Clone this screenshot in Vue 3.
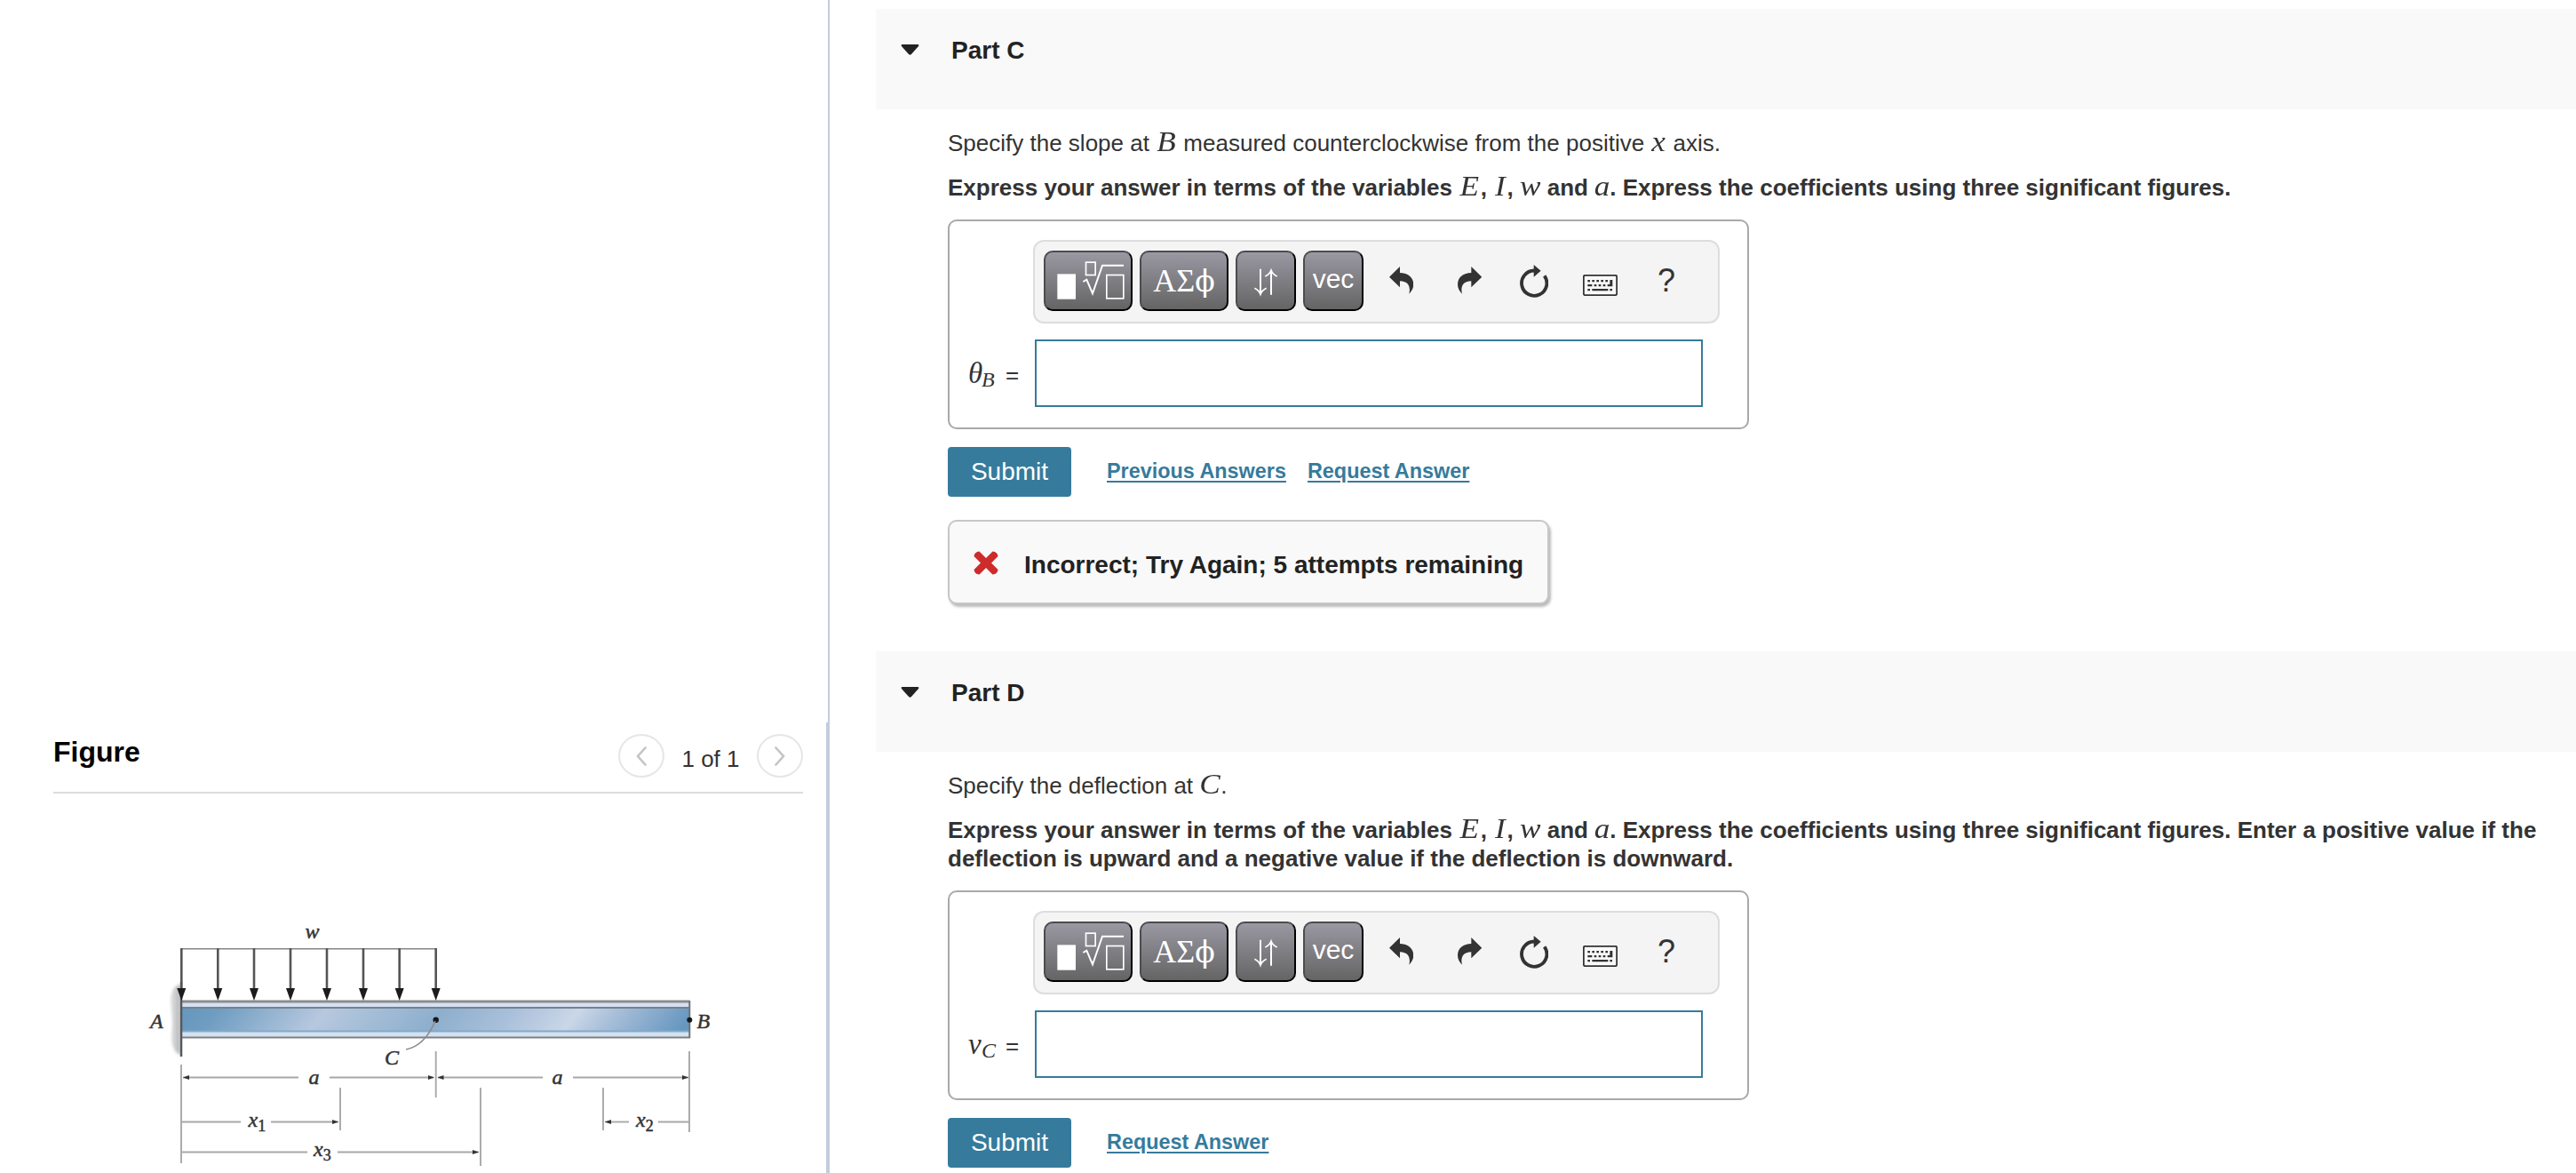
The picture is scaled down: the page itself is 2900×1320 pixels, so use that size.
<template>
  <div class="page">
    <!-- figure panel -->
    <aside class="left-pane">
      <div class="pane-blank"></div>
      <section class="figure-pane">
        <div class="figure-head">
          <h2>Figure</h2>
          <div class="pager">
            <button class="pager-btn">
              <svg width="12" height="22" viewBox="0 0 12 22"><path d="M10.5 1.5 2 11l8.500 9.500" /></svg>
            </button>
            <span class="pager-text">1 of 1</span>
            <button class="pager-btn">
              <svg width="12" height="22" viewBox="0 0 12 22"><path d="M1.500 1.500 10 11l-8.500 9.500" /></svg>
            </button>
          </div>
        </div>

        <svg class="beam" width="690" height="290" viewBox="140 1030 690 290">
          <defs>
            <linearGradient id="web" gradientUnits="userSpaceOnUse" x1="204" y1="1147" x2="776" y2="1147" gradientTransform="skewX(-38) translate(896 0)">
              <stop offset="0" stop-color="#6798bd" />
              <stop offset="0.06" stop-color="#6f9dc1" />
              <stop offset="0.27" stop-color="#b7c8df" />
              <stop offset="0.5" stop-color="#8dafcd" />
              <stop offset="0.64" stop-color="#a9bfda" />
              <stop offset="0.77" stop-color="#cad7e7" />
              <stop offset="0.84" stop-color="#abc0da" />
              <stop offset="1" stop-color="#6697bf" />
            </linearGradient>
            <linearGradient id="wall" x1="0" x2="1" y1="0" y2="0">
              <stop offset="0" stop-color="#e2e3e4" />
              <stop offset="1" stop-color="#b4b6b8" />
            </linearGradient>
            <filter id="soft" x="-50%" y="-20%" width="200%" height="140%"><feGaussianBlur stdDeviation="1.500" /></filter>
          </defs>

          <path d="M203 1108Q193 1109 192 1126L194 1150L193 1168Q194 1184 203 1187Z" fill="url(#wall)" filter="url(#soft)" />
          <rect x="204" y="1126" width="572" height="42" fill="#d5e1ef" />
          <rect x="204" y="1134" width="572" height="26" fill="url(#web)" />
          <path d="M204 1160.500H776" stroke="#82aacd" stroke-width="2" />
          <path d="M204 1134H776" stroke="#738191" stroke-width="2" />
          <path d="M204 1127H776" stroke="#8b8c90" stroke-width="3" />
          <path d="M204 1167.500H777" stroke="#7c7f83" stroke-width="2.200" />
          <path d="M776.300 1126V1168" stroke="#6f7479" stroke-width="2" />
          <path d="M204 1105V1189" stroke="#57585a" stroke-width="2.500" />

          <path d="M203 1067.700H492" stroke="#858585" stroke-width="1.600" />
          <g v-for="x in loadArrows" :key="x">
            <path :d="`M${x} 1067V1114`" stroke="#555" stroke-width="2.600" />
            <path :d="`M${x - 5} 1112H${x + 5}L${x} 1126Z`" fill="#1f1b1c" />
          </g>

          <circle cx="490.700" cy="1147.700" r="3.200" fill="#17181a" />
          <circle cx="776.300" cy="1147.700" r="3" fill="#17181a" />
          <path d="M490 1149Q478 1177 457 1181" fill="none" stroke="#8b8b8b" stroke-width="1.600" />

          <g stroke="#a8a8a8" stroke-width="1.900">
            <path v-for="d in dimLines" :key="d" :d="d" />
          </g>
          <path v-for="h in dimHeads" :key="h.join()" :d="`M${h[0]} ${h[1]}l${-7 * h[2]} -2.500v5z`" fill="#333" />

          <g class="beam-text">
            <text v-for="l in labels" :key="l.x" :x="l.x" :y="l.y">{{ l.t }}<tspan v-if="l.s" class="sub" dy="5">{{ l.s }}</tspan></text>
          </g>
        </svg>
      </section>
    </aside>

    <!-- question parts -->
    <main class="right-pane">
      <section v-for="part in parts" :key="part.name" class="part">
        <header class="part-head">
          <svg width="21" height="12" viewBox="0 0 21 12"><path d="M1.500 0H19.500Q21 .5 20 2L12 11Q10.500 12.500 9 11L1 2Q0 .5 1.500 0Z" fill="#222" /></svg>
          <h3>{{ part.name }}</h3>
        </header>
        <div class="part-body">
          <p>
            <span v-for="(t, i) in part.question" :key="i" :class="{ math: t.w }" :style="t.w && { width: t.w + 'px' }">{{ t.t }}</span>
          </p>
          <p class="hint">
            <span v-for="(t, i) in part.hint" :key="i" :class="{ math: t.w }" :style="t.w && { width: t.w + 'px' }">{{ t.t }}</span>
          </p>

          <div class="answer-box">
            <div class="toolbar">
              <button class="tool wide">
                <svg width="96" height="64" viewBox="6 6 288 192">
                  <rect x="46" y="79" width="62" height="85" fill="#fff" />
                  <g fill="none" stroke="#fff" stroke-width="5">
                    <rect x="142.500" y="39.500" width="32" height="43" />
                    <rect x="212.500" y="82.500" width="57" height="79" />
                    <path d="M133 105l12-7 20 47 33-95h72" stroke-width="6" />
                  </g>
                </svg>
              </button>
              <button class="tool wide greek">ΑΣ<span>ϕ</span></button>
              <button class="tool">
                <svg width="64" height="64" viewBox="6 6 192 192" fill="none" stroke="#fff" stroke-width="6">
                  <path d="M84 62v83M120 149V67" />
                  <path d="M64 127q15 7 20 21 5-14 20-21M100 87q15-7 20-21 5 14 20 21" stroke-width="5" />
                </svg>
              </button>
              <button class="tool vec">vec</button>
              <div class="icons">
                <svg class="undo" width="27.300" height="31" viewBox="0 0 82 93"><path :d="arrow" fill="#333" /></svg>
                <svg class="redo" width="27.300" height="31" viewBox="0 0 82 93"><path :d="arrow" transform="translate(82 0) scale(-1 1)" fill="#333" /></svg>
                <svg class="reset" width="32" height="37" viewBox="0 0 96 111">
                  <path d="M48 19.500A42.500 42.500 0 1 0 83 37" fill="none" stroke="#333" stroke-width="11.500" />
                  <path d="M47 0 71 20 47 41Z" fill="#333" />
                </svg>
                <svg class="keyboard" width="39" height="24" viewBox="0 0 117 72">
                  <rect x="2.500" y="2.500" width="112" height="67" rx="5" fill="#f9f9f9" stroke="#333" stroke-width="5.500" />
                  <path d="M16 18h8v7h-8zM31 18h8v7h-8zM46 18h8v7h-8zM61 18h8v7h-8zM76 18h8v7h-8zM91 18h9v22h-17v-7h8zM16 33h15v7h-15zM38 33h8v7h-8zM53 33h8v7h-8zM68 33h8v7h-8zM16 48h8v7h-8zM31 48h54v7h-54zM91 48h8v7h-8z" fill="#333" />
                </svg>
                <span class="help">?</span>
              </div>
            </div>
            <div class="answer-row">
              <label><i>{{ part.symbol }}</i><i class="idx">{{ part.index }}</i><span>=</span></label>
              <input type="text" />
            </div>
          </div>

          <div class="actions">
            <button class="submit">Submit</button>
            <a v-for="link in part.links" :key="link" href="#">{{ link }}</a>
          </div>

          <div v-if="part.feedback" class="feedback">
            <svg width="28" height="27" viewBox="0 0 28 27"><path d="M6.500 0.500 14 8 21.500 0.500Q27 1 27.500 6L20 13.500 27.500 21Q27 26 21.500 26.500L14 19 6.500 26.500Q1 26 .5 21L8 13.500 .5 6Q1 1 6.500 .5Z" fill="#cd2b2c" /></svg>
            <span>{{ part.feedback }}</span>
          </div>
        </div>
      </section>
    </main>
  </div>
</template>

<script setup>
const arrow = 'M0 35 36 0V21C62 21 82 36 82 60C82 74 75 84 67 92C72 72 68 50 36 49V70Z'

const variables = [
  { t: 'Express your answer in terms of the variables ' },
  { t: 'E', w: 24.5 },
  { t: ', ' },
  { t: 'I', w: 15.5 },
  { t: ', ' },
  { t: 'w', w: 23.5 },
  { t: ' and ' },
  { t: 'a', w: 17 }
]

const parts = [
  {
    name: 'Part C',
    question: [
      { t: 'Specify the slope at ' },
      { t: 'B', w: 24 },
      { t: ' measured counterclockwise from the positive ' },
      { t: 'x', w: 18 },
      { t: ' axis.' }
    ],
    hint: [...variables, { t: '. Express the coefficients using three significant figures.' }],
    symbol: 'θ',
    index: 'B',
    links: ['Previous Answers', 'Request Answer'],
    feedback: 'Incorrect; Try Again; 5 attempts remaining'
  },
  {
    name: 'Part D',
    question: [{ t: 'Specify the deflection at ' }, { t: 'C', w: 24 }, { t: '.' }],
    hint: [
      ...variables,
      { t: '. Express the coefficients using three significant figures. Enter a positive value if the deflection is upward and a negative value if the deflection is downward.' }
    ],
    symbol: 'v',
    index: 'C',
    links: ['Request Answer']
  }
]

// beam diagram
const loadArrows = [204.3, 245.3, 286, 327, 368, 409, 449.7, 490.7]

const dimLines = [
  'M204 1198V1309', 'M490.700 1183V1235', 'M776 1183V1274',
  'M383 1224V1272', 'M541 1224V1312', 'M679 1224V1272',
  'M206 1212.500H336', 'M371 1212.500H488', 'M493 1212.500H611', 'M645 1212.500H775',
  'M205 1262.500H271', 'M305 1262.500H381', 'M681 1262.500H708', 'M741 1262.500H776',
  'M205 1296.500H346', 'M380 1296.500H539'
]

// x, y, direction
const dimHeads = [
  [206, 1212.5, -1], [489, 1212.5, 1], [492.5, 1212.5, -1], [775, 1212.5, 1],
  [381, 1262.5, 1], [681, 1262.5, -1], [539, 1296.5, 1]
]

const labels = [
  { t: 'w', x: 343.5, y: 1056 },
  { t: 'A', x: 169, y: 1157 },
  { t: 'B', x: 784.5, y: 1157 },
  { t: 'C', x: 433, y: 1197.5 },
  { t: 'a', x: 347.5, y: 1219.5 },
  { t: 'a', x: 621.5, y: 1219.5 },
  { t: 'x', s: '1', x: 279.5, y: 1267.5 },
  { t: 'x', s: '2', x: 716, y: 1268 },
  { t: 'x', s: '3', x: 353, y: 1301 }
]
</script>

<style>
body { background: #fff; overflow: hidden; }
</style>

<style scoped>
.page { display: flex; width: 2900px; height: 1320px; overflow: hidden; color: #333; font-family: "Liberation Sans", Arial, sans-serif; font-size: 26px; }
h2, h3, p { margin: 0; }
button { padding: 0; font-family: inherit; cursor: pointer; }
svg { display: block; flex: none; }

.left-pane { width: 934px; flex: none; }
.pane-blank { height: 813px; border-right: 2px solid #c2cddd; }
.figure-pane { height: 507px; border-right: 4px solid #c2cddd; }
.figure-head { display: flex; justify-content: space-between; margin-left: 60px; width: 844px; height: 80px; box-sizing: border-box; padding-top: 13px; border-bottom: 2px solid #ddd; }
.figure-head h2 { color: #000; font-size: 32px; line-height: 40px; }
.pager { display: flex; height: 49px; }
.pager-btn { display: flex; align-items: center; justify-content: center; width: 52px; height: 49px; border: 2px solid #e6e6e6; border-radius: 50%; background: #fff; }
.pager-btn path { fill: none; stroke: #c4c4c4; stroke-width: 2.6; stroke-linecap: round; }
.pager-text { width: 104px; line-height: 56px; text-align: center; white-space: nowrap; }
.beam { margin: 137px 0 0 140px; }
.beam-text { font: italic 24px "Liberation Serif", serif; fill: #333; stroke: #333; stroke-width: .5; }
.beam-text .sub { font-style: normal; font-size: 18px; }

.right-pane { flex: 1; padding: 10px 0 0 52px; }
.part { margin-bottom: 53.500px; }
.part-head { display: flex; gap: 36px; height: 113px; padding-left: 28px; background: #f9f9f9; }
.part-head svg { margin-top: 40px; }
.part-head h3 { color: #222; font-size: 28px; line-height: 32px; margin-top: 31px; }
.part-body { padding: 22px 30px 0 81px; }
.part-body p { line-height: 32px; margin-bottom: 18px; }
.part-body .hint { font-weight: 700; margin-bottom: 20px; }
.math { display: inline-block; white-space: nowrap; text-align: center; font: italic 400 32px/0 "Liberation Serif", serif; transform: scaleX(1.1); }

.answer-box { width: 902px; height: 236px; box-sizing: border-box; border: 2px solid #a9a9a9; border-radius: 10px; padding: 21px 0 0 94px; }
.toolbar { display: flex; gap: 8px; width: 773px; height: 94px; box-sizing: border-box; padding: 10px 0 0 10px; border: 2px solid #ddd; border-radius: 12px; background: #f4f4f4; }
.tool { flex: none; width: 68px; height: 68px; border: 2px solid; border-color: #4c4c4c #000 #000 #4c4c4c; border-radius: 10px; background: linear-gradient(#9a98a2, #646464); color: #fff; }
.tool.wide { width: 100px; }
.greek { font-family: "Liberation Serif", serif; font-size: 36px; line-height: 60px; white-space: nowrap; }
.greek span { font-family: "DejaVu Serif", serif; font-size: 33px; line-height: 0; }
.vec { font-size: 30px; line-height: 57px; padding-bottom: 5px; }
.icons { display: flex; align-items: flex-start; margin-left: 20.500px; color: #333; }
.undo { margin-top: 18px; }
.redo { margin: 18px 0 0 50px; }
.reset { margin: 16px 0 0 43px; }
.keyboard { margin: 27px 0 0 38.500px; }
.help { margin: 12px 0 0 45.500px; font-size: 36px; line-height: 44px; }

.answer-row { display: flex; margin: 18px 0 0 -73px; }
.answer-row label { display: flex; align-items: baseline; width: 75px; height: 76px; line-height: 76px; }
.answer-row i { width: 15px; font-family: "Liberation Serif", serif; font-size: 33px; }
.answer-row .idx { position: relative; top: 4px; width: 27px; font-size: 24px; }
.answer-row input { width: 752px; height: 76px; box-sizing: border-box; border: 2px solid #367b9c; background: #fff; outline: none; }

.actions { display: flex; align-items: center; gap: 24px; margin-top: 19.500px; }
.submit { width: 139px; height: 56px; margin-right: 16px; border: none; border-radius: 4px; background: #367b9c; color: #fff; font-size: 28px; }
.actions a { color: #367b9c; font-size: 23.400px; font-weight: 700; text-decoration: underline; text-decoration-thickness: 2px; text-underline-offset: 3px; text-decoration-skip-ink: auto; }

.feedback { display: flex; align-items: center; gap: 29px; width: 677px; height: 95px; box-sizing: border-box; margin-top: 26px; padding: 7px 0 0 27px; border: 2px solid #c6c6c6; border-radius: 10px; background: #f9f9f9; box-shadow: 2px 3px 3px #bbb; color: #222; font-size: 28px; font-weight: 700; }
.feedback svg { margin-top: -4px; }
</style>
